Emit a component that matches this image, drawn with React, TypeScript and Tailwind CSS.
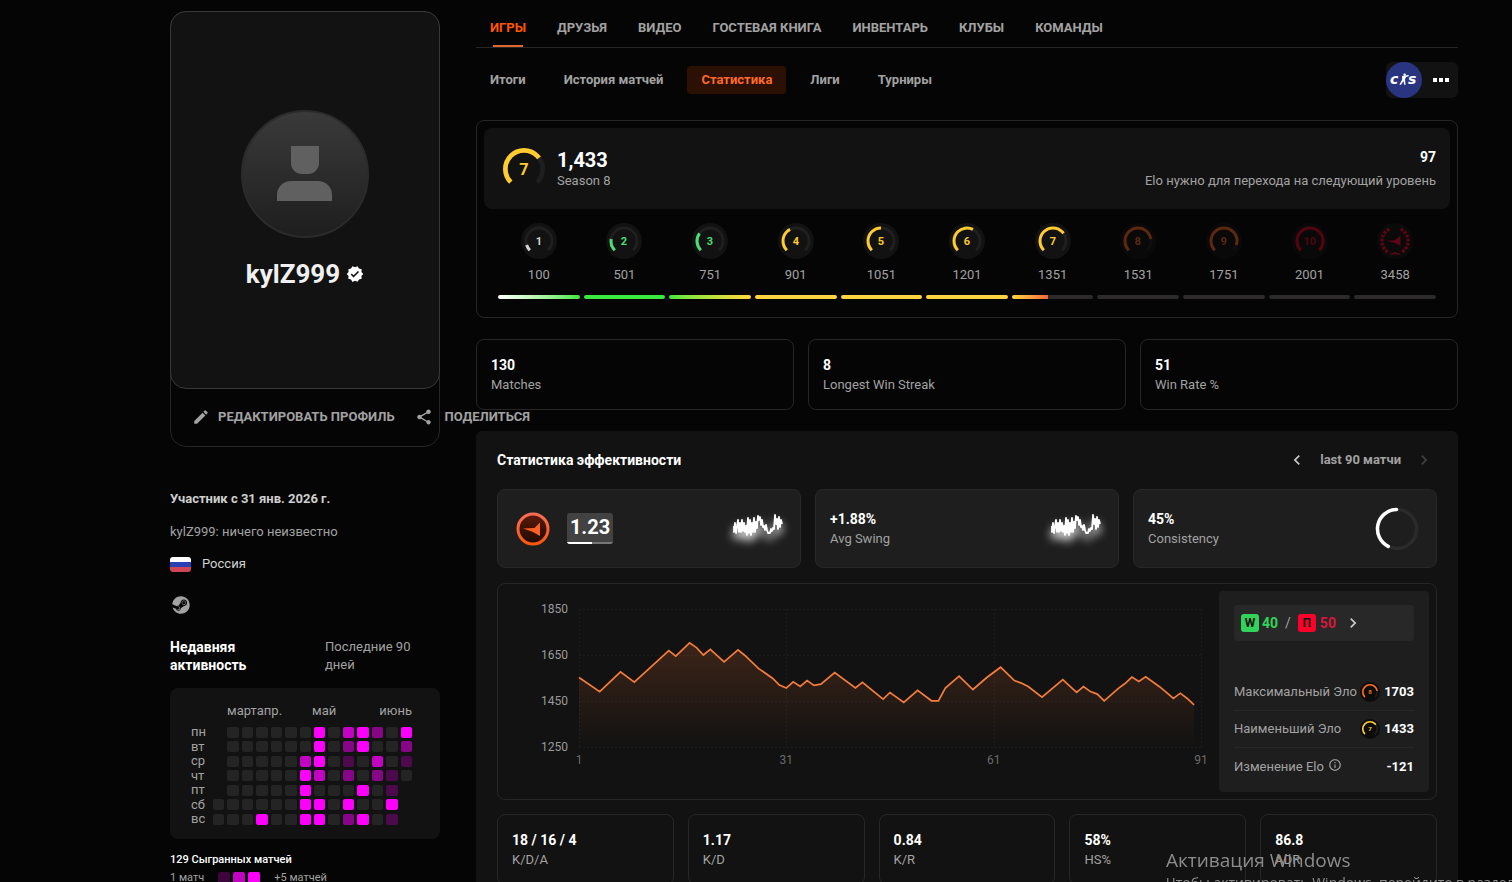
import type { ReactNode } from "react";
import { FaSteam } from "react-icons/fa";
import {
  MdChevronLeft,
  MdChevronRight,
  MdEdit,
  MdInfoOutline,
  MdShare,
  MdVerified,
} from "react-icons/md";

const tabs = ["Игры", "Друзья", "Видео", "Гостевая книга", "Инвентарь", "Клубы", "Команды"];
const subTabs = ["Итоги", "История матчей", "Статистика", "Лиги", "Турниры"];

const GREEN = "#4ade73";
const YELLOW = "#ffcb2e";
const ORANGE = "#ff6c20";
const RED = "#e80128";

const levels = [
  { level: 1, elo: 100, color: "#d5d5d5", bar: "bg-linear-to-r from-white to-[#3be83f]" },
  { level: 2, elo: 501, color: GREEN, bar: "bg-[#3be83f]" },
  { level: 3, elo: 751, color: GREEN, bar: "bg-linear-to-r from-[#3be83f] to-[#ffd83c]" },
  { level: 4, elo: 901, color: YELLOW, bar: "bg-[#ffd440]" },
  { level: 5, elo: 1051, color: YELLOW, bar: "bg-[#ffd440]" },
  { level: 6, elo: 1201, color: YELLOW, bar: "bg-[#ffd440]" },
  {
    level: 7,
    elo: 1351,
    color: YELLOW,
    bar: "bg-linear-to-r from-[#ffd440] from-0% via-[#f2653c] via-45% to-[#2c2a2a] to-45%",
  },
  { level: 8, elo: 1531, color: ORANGE, bar: "bg-[#2c2a2a]", locked: true },
  { level: 9, elo: 1751, color: ORANGE, bar: "bg-[#2c2a2a]", locked: true },
  { level: 10, elo: 2001, color: RED, bar: "bg-[#2c2a2a]", locked: true },
];

// 0 = no matches, 4 = five and more, "." = outside of the range
const activity = [
  { day: "пн", cells: ".0000004034204" },
  { day: "вт", cells: ".0000004024002" },
  { day: "ср", cells: ".0000034010301" },
  { day: "чт", cells: ".0000043020210" },
  { day: "пт", cells: ".000004000401." },
  { day: "сб", cells: "0000004404004." },
  { day: "вс", cells: "0004004402401." },
];

const cellColors: Record<string, string> = {
  "0": "bg-[#242424]",
  "1": "bg-[#4c0a4c]",
  "2": "bg-[#870687]",
  "3": "bg-[#c203c2]",
  "4": "bg-[#fc00fc]",
};

// [match, elo]
const eloPoints = [
  [1, 1552], [4, 1491], [7, 1577], [9, 1532], [14, 1669], [15, 1645], [17, 1703], [18, 1682],
  [19, 1650], [20, 1675], [22, 1620], [24, 1672], [25, 1648], [27, 1591], [29, 1549], [30, 1519],
  [31, 1506], [32, 1533], [33, 1513], [34, 1539], [35, 1518], [36, 1523], [38, 1574], [41, 1507],
  [42, 1531], [45, 1458], [46, 1487], [48, 1444], [50, 1496], [52, 1451], [53, 1451], [54, 1506],
  [56, 1558], [58, 1500], [60, 1552], [62, 1597], [64, 1539], [65, 1528], [66, 1513], [68, 1467],
  [71, 1543], [73, 1488], [74, 1513], [75, 1491], [76, 1480], [77, 1451], [79, 1504], [80, 1526],
  [81, 1554], [82, 1535], [83, 1555], [85, 1512], [86, 1488], [87, 1461], [88, 1484], [89, 1461],
  [90, 1433],
];

const Gauge = ({
  level,
  color,
  className,
  back,
  thin,
}: {
  level: number;
  color: string;
  className: string;
  back?: string;
  thin?: boolean;
}) => {
  const r = thin ? 13 : 16;
  const width = thin ? 3 : 4;
  return (
    <svg viewBox="0 0 36 36" className={className}>
      {back && <circle cx="18" cy="18" r="18" fill={back} />}
      <g fill="none" strokeWidth={width} transform="rotate(135 18 18)">
        <circle cx="18" cy="18" r={r} stroke="#1f1f1f" pathLength={100} strokeDasharray="75 100" />
        <circle
          cx="18"
          cy="18"
          r={r}
          stroke={color}
          pathLength={100}
          strokeDasharray={`${level * 7.5} 100`}
        />
      </g>
      <text
        x="18"
        y={thin ? 22 : 23}
        fill={color}
        fontSize={thin ? 11 : 14}
        fontWeight="700"
        textAnchor="middle"
      >
        {level}
      </text>
    </svg>
  );
};

const laurel = [32, 50, 68, 86, 104, 122, 140];

const ChallengerBadge = () => (
  <svg viewBox="0 0 36 36" className="h-9 w-9 opacity-40">
    <circle cx="18" cy="18" r="18" fill="#121212" />
    <g fill={RED}>
      {[...laurel, ...laurel.map((a) => -a)].map((a) => (
        <rect key={a} x="16.6" y="3.2" width="2.8" height="3.4" transform={`rotate(${a} 18 18)`} />
      ))}
      <path d="M10 17.8 18 17.2 23.5 12.5V23L17.5 19.8Z" />
    </g>
    <path d="M13.5 31.5 18 29.8 22.5 31.5" fill="none" stroke={RED} strokeWidth="1.5" />
  </svg>
);

const Sparkline = () => (
  <svg
    viewBox="0 2 50 20"
    className="h-5 w-[50px] overflow-visible drop-shadow-[0_6px_5px_rgba(255,255,255,0.85)]"
  >
    <path
      d="M1 9v6l1-9 1 10 2-13 1 12 1-9 1 9 1-12 1 11 1-8 1 9 1-6 1 9 1-17 1 15 1-13 1 15 1-12 1 9 1-14 1 14 1-10 1 6 1-12 1 4 1-3 1 8 1-5 1 7 1-1 1 4 1-5 1 5 1 3 2 0 1-4 1 2 1-3 1 1 1-14 1 9 1-5 1 10 1-12 1 10 1-7 1 4"
      fill="none"
      stroke="#fff"
      strokeWidth="1.8"
      strokeLinejoin="round"
    />
  </svg>
);

const Stat = ({ value, label }: { value: string; label: string }) => (
  <div>
    <div className="text-sm leading-[19px] font-bold text-white">{value}</div>
    <div className="text-[13px] leading-[19px]">{label}</div>
  </div>
);

const EloChart = () => {
  const x = (i: number) => 81 + ((i - 1) * 622) / 90;
  const y = (elo: number) => 25 + ((1850 - elo) * 138) / 600;
  const line = eloPoints.map(([i, elo]) => `${x(i).toFixed(1)} ${y(elo).toFixed(1)}`).join("L");
  return (
    <svg viewBox="0 0 721 215" className="w-full min-w-0 flex-1 self-start">
      <defs>
        <linearGradient id="elo" gradientUnits="userSpaceOnUse" x1="0" y1="58" x2="0" y2="163">
          <stop offset="0" stopColor="#ff7733" stopOpacity="0.18" />
          <stop offset="1" stopColor="#ff7733" stopOpacity="0" />
        </linearGradient>
      </defs>
      <g stroke="#1c1c1c" strokeDasharray="2 2">
        {[1850, 1650, 1450, 1250].map((elo) => (
          <path key={elo} d={`M81 ${y(elo) + 0.5}H703`} />
        ))}
        {[1, 31, 61, 91].map((i) => (
          <path key={i} d={`M${Math.round(x(i)) + 0.5} 25V163`} />
        ))}
      </g>
      <path d={`M${line}V163H81Z`} fill="url(#elo)" />
      <path d={`M${line}`} fill="none" stroke="#f57c3b" strokeWidth="1.7" />
      <g fontSize="12" fill="#9a9a9a" textAnchor="end">
        {[1850, 1650, 1450, 1250].map((elo) => (
          <text key={elo} x="70" y={y(elo) + 4}>
            {elo}
          </text>
        ))}
      </g>
      <g fontSize="12" fill="#6a6a6a" textAnchor="middle">
        {[1, 31, 61, 91].map((i) => (
          <text key={i} x={x(i)} y="180">
            {i}
          </text>
        ))}
      </g>
    </svg>
  );
};

const EloRow = ({ label, children }: { label: ReactNode; children: ReactNode }) => (
  <div className="flex h-[37px] items-center justify-between border-b border-[#282828] text-[13px] last:border-0">
    <span className="flex items-center gap-1 whitespace-nowrap">{label}</span>
    <span className="flex items-center gap-1 font-bold text-white">{children}</span>
  </div>
);

const Sidebar = () => (
  <aside className="w-[270px] shrink-0 pt-[11px] text-[13px]">
    <section className="rounded-2xl border border-[#262626]">
      <div className="-m-px flex h-[378px] flex-col items-center rounded-2xl border border-[#383838] bg-[#121212] pt-[98px]">
        <svg viewBox="0 0 128 128" className="h-32 w-32">
          <defs>
            <linearGradient id="avatar" x1="0" y1="0" x2="0" y2="1">
              <stop offset="0" stopColor="#3a3a3a" />
              <stop offset="1" stopColor="#1e1e1e" />
            </linearGradient>
          </defs>
          <circle cx="64" cy="64" r="63" fill="url(#avatar)" stroke="#2b2b2b" strokeWidth="2" />
          <path d="M50 36h28v17a11 11 0 0 1-11 11h-6a11 11 0 0 1-11-11Z" fill="#606060" />
          <path d="M36 91v-6a14 14 0 0 1 14-14h27a14 14 0 0 1 14 14v6Z" fill="#606060" />
        </svg>
        <h1 className="mt-5 flex items-center gap-[6px] text-[26px] leading-8 font-bold text-[#f0f0f0]">
          kylZ999
          <MdVerified className="h-[18px] w-[18px] text-white" />
        </h1>
      </div>
      <div className="flex h-[58px] items-center gap-5 pl-[21px] text-[13px] font-bold whitespace-nowrap">
        <button className="flex items-center gap-2 uppercase">
          <MdEdit className="h-[18px] w-[18px]" />
          Редактировать профиль
        </button>
        <button className="flex items-center gap-3 uppercase">
          <MdShare className="h-[18px] w-[18px]" />
          Поделиться
        </button>
      </div>
    </section>

    <p className="mt-[42px] leading-5 font-bold text-[#cfcfcf]">Участник с 31 янв. 2026 г.</p>
    <p className="mt-[13px] leading-5">kylZ999: ничего неизвестно</p>
    <div className="mt-3 flex items-center gap-[11px] leading-5 text-[#d2d2d2]">
      <span className="flex h-[15px] w-[21px] flex-col overflow-hidden rounded-[3px]">
        <i className="flex-1 bg-white" />
        <i className="flex-1 bg-[#2b3fb5]" />
        <i className="flex-1 bg-[#cf4457]" />
      </span>
      Россия
    </div>
    <a href="#steam" aria-label="Steam" className="mt-[22px] ml-[2px] block w-[18px]">
      <FaSteam className="h-[18px] w-[18px]" />
    </a>

    <div className="mt-6 flex leading-[18px]">
      <h2 className="w-[155px] pr-10 text-sm leading-[18px] font-bold text-white">
        Недавняя активность
      </h2>
      <span className="flex-1">Последние 90 дней</span>
    </div>

    <div className="mt-[14px] rounded-lg bg-[#121212] py-[13px] pr-7 pl-[21px]">
      <div className="flex pl-9 leading-5">
        <span>март</span>
        <span className="mr-[30px]">апр.</span>
        <span>май</span>
        <span className="ml-auto">июнь</span>
      </div>
      <div className="mt-1 flex h-[101px] flex-col justify-between">
        {activity.map(({ day, cells }) => (
          <div key={day} className="flex h-[14px] items-center gap-[7px]">
            <span className="w-[15px] leading-[14px]">{day}</span>
            <div className="grid flex-1 grid-cols-14 gap-[3px]">
              {cells.split("").map((c, i) => (
                <i key={i} className={`h-[11px] rounded-[2px] ${cellColors[c] ?? ""}`} />
              ))}
            </div>
          </div>
        ))}
      </div>
    </div>

    <p className="mt-3 text-[11px] leading-[18px] font-medium text-white">129 Сыгранных матчей</p>
    <div className="flex items-center text-[11px] leading-[18px]">
      1 матч
      <span className="mx-[14px] flex gap-[3px]">
        <i className="h-3 w-3 rounded-[2px] bg-[#3d043d]" />
        <i className="h-3 w-3 rounded-[2px] bg-[#c203c2]" />
        <i className="h-3 w-3 rounded-[2px] bg-[#fc00fc]" />
      </span>
      +5 матчей
    </div>
  </aside>
);

const App = () => {
  return (
    <div className="relative h-screen overflow-x-hidden overflow-y-auto bg-[#050505] font-['Roboto','Noto_Sans',sans-serif] text-[#a2a2a2] [scrollbar-width:none]">
      <div className="flex gap-9 pr-[54px] pb-10 pl-[170px]">
        <Sidebar />

        <main className="min-w-0 flex-1">
          <nav className="flex h-12 gap-[31px] border-b border-[#262626] px-[14px] pt-2 text-[13px] font-bold uppercase">
            {tabs.map((tab, i) => (
              <a
                key={tab}
                href="#tab"
                className={
                  i === 0
                    ? "flex flex-col items-center justify-between pt-[10px] text-[#ff5500] after:h-[2px] after:w-[30px] after:bg-[#e0662c]"
                    : "pt-[10px]"
                }
              >
                {tab}
              </a>
            ))}
          </nav>

          <div className="mt-[14px] flex h-9 items-center justify-between">
            <nav className="flex items-center gap-[10px] text-[13px] font-bold">
              {subTabs.map((tab) => (
                <a
                  key={tab}
                  href="#sub"
                  className={
                    tab === "Статистика"
                      ? "rounded bg-[#2c1003] px-[14px] py-1 leading-5 text-[#ff6a26]"
                      : "px-[14px] py-1 leading-5"
                  }
                >
                  {tab}
                </a>
              ))}
            </nav>
            <button className="flex h-9 w-[72px] items-center justify-between rounded-md bg-[#121212] pr-[9px]">
              <svg viewBox="0 0 36 36" className="h-9 w-9">
                <circle cx="18" cy="18" r="18" fill="#2a3581" />
                <g
                  fill="#fff"
                  fontFamily="'DejaVu Sans', sans-serif"
                  fontSize="14"
                  fontWeight="700"
                  fontStyle="italic"
                >
                  <text x="4" y="22">c</text>
                  <text x="22" y="22">s</text>
                </g>
                <circle cx="18.6" cy="12.6" r="1.2" fill="#fff" />
                <path
                  d="M16 14.2 18.6 13.6 22.8 13 22.6 14.2 20 14.9 19 17.5 19.6 22.8H18.2L17.4 19 15 22.8H13.4L16.2 17.5Z"
                  fill="#fff"
                />
              </svg>
              <span className="flex gap-[2px]">
                <i className="h-1 w-1 bg-white" />
                <i className="h-1 w-1 bg-white" />
                <i className="h-1 w-1 bg-white" />
              </span>
            </button>
          </div>

          <section className="mt-[22px] rounded-lg border border-[#262626] p-[7px] pb-[18px]">
            <div className="flex h-[81px] items-center justify-between rounded-lg bg-[#121212] pr-[14px] pl-[19px]">
              <div className="flex items-center gap-3">
                <Gauge level={7} color={YELLOW} className="h-[42px] w-[42px]" />
                <div className="pt-[2px]">
                  <div className="text-xl leading-[21px] font-bold text-white">1,433</div>
                  <div className="text-[13px] leading-[19px]">Season 8</div>
                </div>
              </div>
              <div className="text-right text-[13px]">
                <div className="text-sm leading-[23px] font-bold text-white">97</div>
                <div className="leading-[23px]">Elo нужно для перехода на следующий уровень</div>
              </div>
            </div>
            <div className="mt-[14px] grid grid-cols-11 gap-1 px-[14px]">
              {levels.map(({ level, elo, color, bar, locked }) => (
                <div key={level} className="flex flex-col items-center">
                  <Gauge
                    level={level}
                    color={color}
                    back="#121212"
                    thin
                    className={locked ? "h-9 w-9 opacity-35" : "h-9 w-9"}
                  />
                  <span className="mt-[6px] text-[13px] leading-5">{elo}</span>
                  <span className={`mt-[10px] h-1 w-full rounded-full ${bar}`} />
                </div>
              ))}
              <div className="flex flex-col items-center">
                <ChallengerBadge />
                <span className="mt-[6px] text-[13px] leading-5">3458</span>
                <span className="mt-[10px] h-1 w-full rounded-full bg-[#2c2a2a]" />
              </div>
            </div>
          </section>

          <section className="mt-[21px] grid grid-cols-3 gap-[14px]">
            {[
              ["130", "Matches"],
              ["8", "Longest Win Streak"],
              ["51", "Win Rate %"],
            ].map(([value, label]) => (
              <div key={label} className="flex h-[71px] items-center rounded-lg border border-[#262626] px-[14px]">
                <Stat value={value} label={label} />
              </div>
            ))}
          </section>

          <section className="mt-[21px] rounded-t-md bg-[#121212] px-[21px] pb-5">
            <div className="flex h-[58px] items-center justify-between pr-[3px]">
              <h2 className="text-sm font-bold text-white">Статистика эффективности</h2>
              <div className="flex items-center gap-[13px] text-[13px] font-bold">
                <button aria-label="Назад">
                  <MdChevronLeft className="h-5 w-5 text-[#c8c8c8]" />
                </button>
                last 90 матчи
                <button aria-label="Вперёд">
                  <MdChevronRight className="h-5 w-5 text-[#404040]" />
                </button>
              </div>
            </div>

            <div className="grid grid-cols-3 gap-[14px]">
              <div className="flex h-[79px] items-center rounded-lg border border-[#282828] bg-[#1e1e1e] px-[17px]">
                <svg viewBox="0 0 36 36" className="h-9 w-9">
                  <defs>
                    <linearGradient id="ring" x1="0" y1="0" x2="0" y2="1">
                      <stop offset="0" stopColor="#fa6e58" />
                      <stop offset="1" stopColor="#fb560c" />
                    </linearGradient>
                    <linearGradient id="disc" x1="0" y1="0" x2="0" y2="1">
                      <stop offset="0" stopColor="#5c1a08" />
                      <stop offset="1" stopColor="#1e0a02" />
                    </linearGradient>
                  </defs>
                  <circle cx="18" cy="18" r="15" fill="url(#disc)" stroke="url(#ring)" strokeWidth="3" />
                  <path d="M8 17.6 19.5 17 25 11.5V25L17 20.5Z" fill="#fb6122" />
                </svg>
                <div className="ml-4 h-[31px] w-[46px] overflow-hidden rounded-[3px] bg-[#424242] text-center text-xl leading-[29px] font-bold text-white">
                  1.23
                  <div className="h-[2px] bg-[#777]">
                    <div className="h-full w-[25px] bg-white" />
                  </div>
                </div>
                <div className="ml-auto">
                  <Sparkline />
                </div>
              </div>
              <div className="flex h-[79px] items-center justify-between rounded-lg border border-[#282828] bg-[#1e1e1e] pr-[17px] pl-[14px]">
                <Stat value="+1.88%" label="Avg Swing" />
                <Sparkline />
              </div>
              <div className="flex h-[79px] items-center justify-between rounded-lg border border-[#282828] bg-[#1e1e1e] pr-[17px] pl-[14px]">
                <Stat value="45%" label="Consistency" />
                <svg viewBox="0 0 44 44" className="h-11 w-11">
                  <g fill="none" strokeWidth="3.5">
                    <circle cx="22" cy="22" r="19.5" stroke="#2b2b2b" />
                    <path d="M21.5 2.5A19.5 19.5 0 0 0 13.2 39.4" stroke="#fff" strokeLinecap="round" />
                  </g>
                </svg>
              </div>
            </div>

            <div className="mt-[15px] flex rounded-lg border border-[#262626] pr-[7px]">
              <EloChart />
              <div className="my-[7px] w-[210px] shrink-0 rounded bg-[#1e1e1e] px-[15px] pt-[14px] pb-[7px]">
                <button className="flex h-9 w-full items-center rounded bg-[#282828] px-[7px] text-sm font-bold">
                  <span className="flex h-[18px] w-[18px] items-center justify-center rounded-[3px] bg-[#32d35b] text-xs text-[#111]">
                    W
                  </span>
                  <span className="ml-[3px] text-[#32d35b]">40</span>
                  <span className="mx-[7px] font-normal">/</span>
                  <span className="flex h-[18px] w-[18px] items-center justify-center rounded-[3px] bg-[#ff002b] text-xs text-[#111]">
                    П
                  </span>
                  <span className="ml-1 text-[#d9173a]">50</span>
                  <MdChevronRight className="ml-[7px] h-5 w-5 text-[#c8c8c8]" />
                </button>
                <div className="mt-[33px]">
                  <EloRow label="Максимальный Эло">
                    <Gauge level={8} color={ORANGE} back="#0c0c0c" thin className="h-5 w-5" />
                    1703
                  </EloRow>
                  <EloRow label="Наименьший Эло">
                    <Gauge level={7} color={YELLOW} back="#0c0c0c" thin className="h-5 w-5" />
                    1433
                  </EloRow>
                  <EloRow
                    label={
                      <>
                        Изменение Elo <MdInfoOutline className="mb-1 h-[14px] w-[14px]" />
                      </>
                    }
                  >
                    -121
                  </EloRow>
                </div>
              </div>
            </div>

            <div className="mt-[14px] grid grid-cols-5 gap-[14px]">
              {[
                ["18 / 16 / 4", "K/D/A"],
                ["1.17", "K/D"],
                ["0.84", "K/R"],
                ["58%", "HS%"],
                ["86.8", "ADR"],
              ].map(([value, label]) => (
                <div key={label} className="flex h-[71px] items-center rounded-lg border border-[#262626] px-[14px]">
                  <Stat value={value} label={label} />
                </div>
              ))}
            </div>
          </section>
        </main>
      </div>

      <div className="pointer-events-none fixed right-0 -bottom-3 w-[346px] overflow-hidden font-['Open_Sans','Noto_Sans',sans-serif] whitespace-nowrap text-[#8c8c8c]">
        <div className="text-[19px] leading-6">Активация Windows</div>
        <div className="text-sm leading-[22px]">
          Чтобы активировать Windows, перейдите в раздел "Параметры".
        </div>
      </div>
    </div>
  );
};

export default App;
